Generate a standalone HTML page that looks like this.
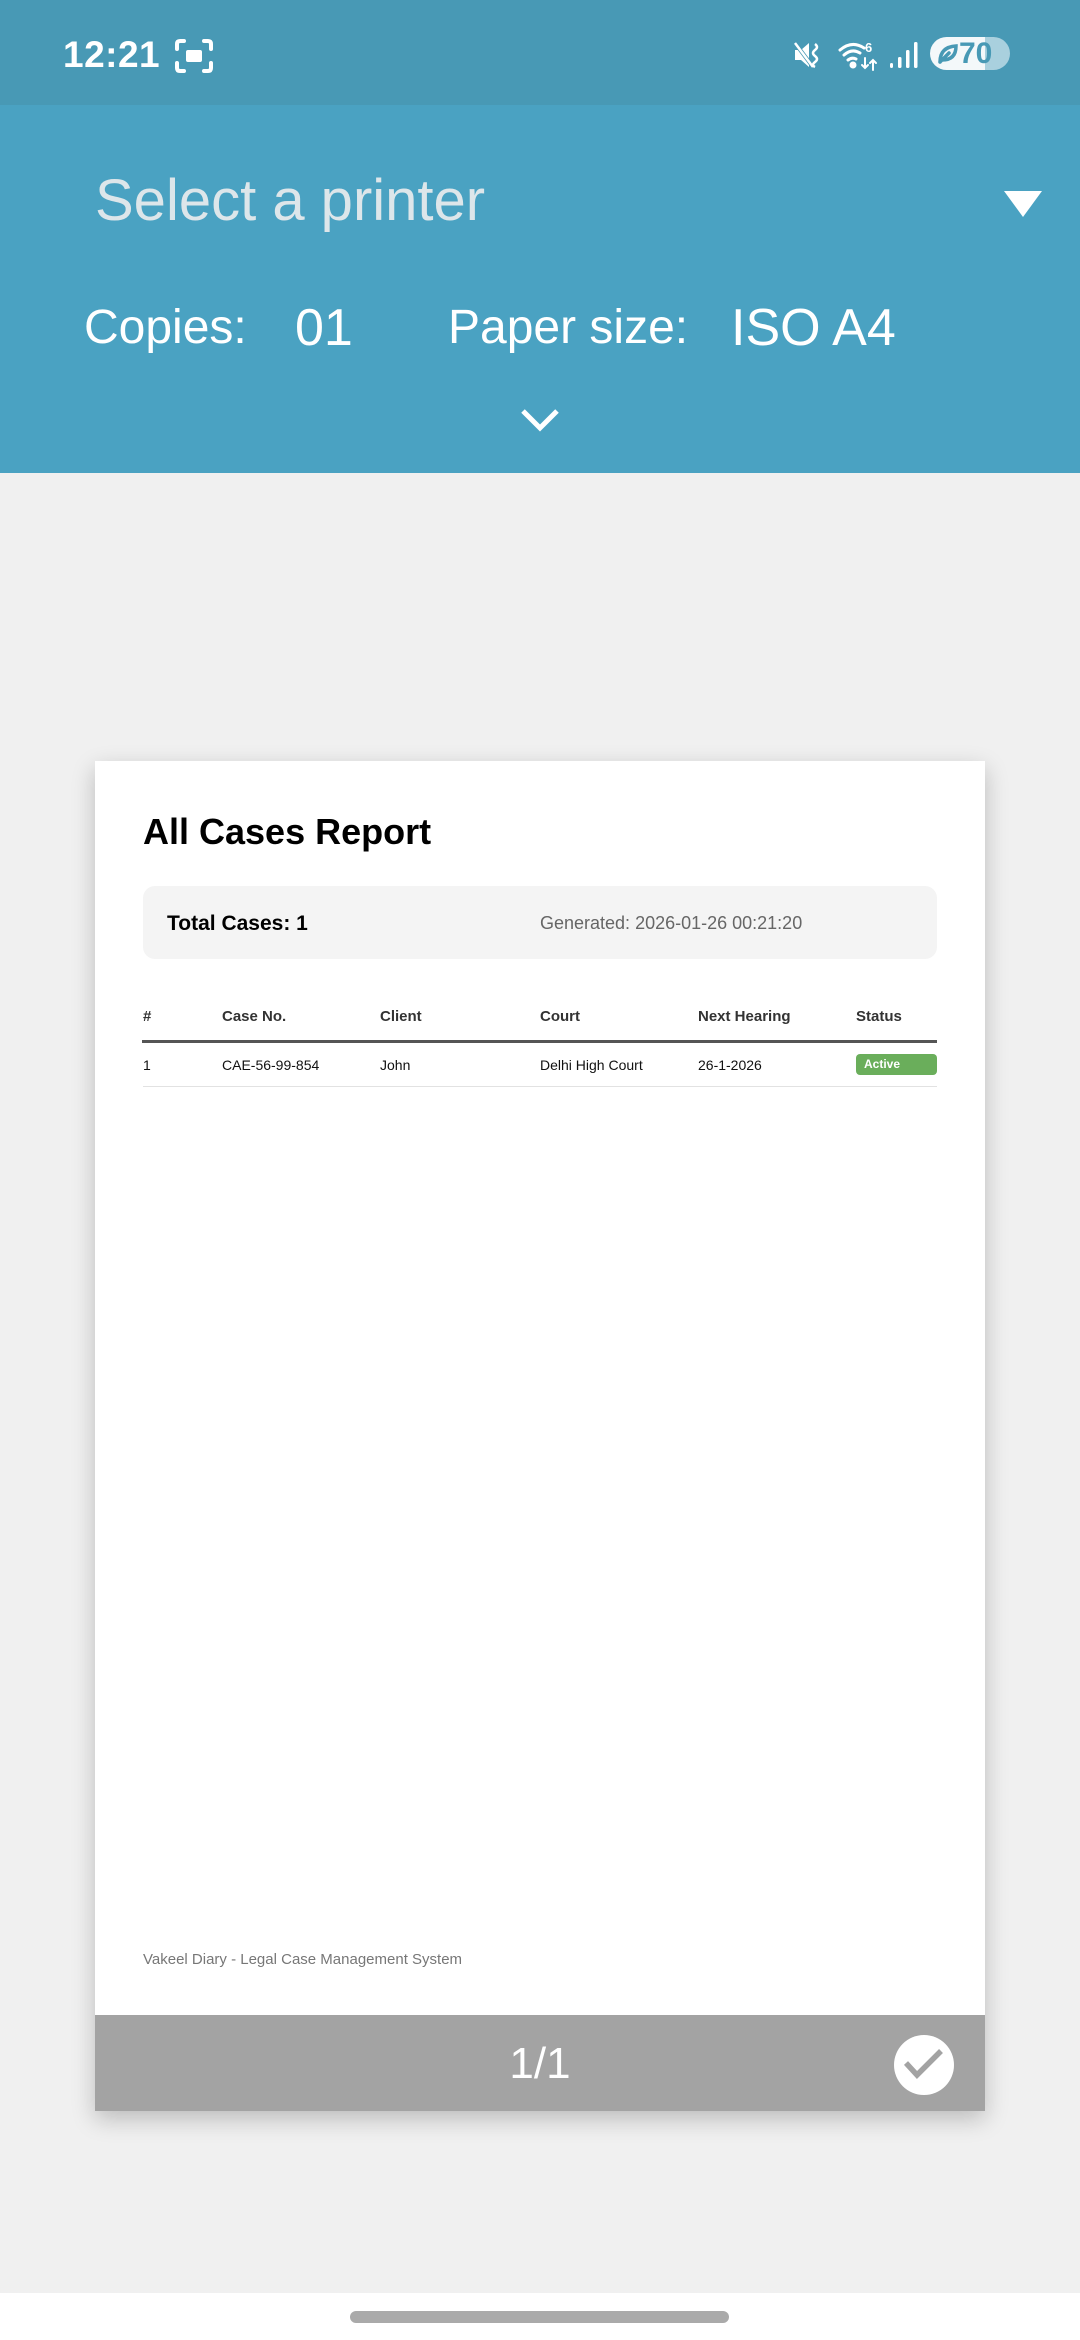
<!DOCTYPE html>
<html><head><meta charset="utf-8"><style>
*{margin:0;padding:0;box-sizing:border-box}
body{width:1080px;height:2340px;background:#f0f0f0;font-family:"Liberation Sans",sans-serif;position:relative;overflow:hidden}
.abs{position:absolute;white-space:nowrap}
#sb{position:absolute;left:0;top:0;width:1080px;height:105px;background:#4899b5}
#hd{position:absolute;left:0;top:105px;width:1080px;height:368px;background:#4aa2c2}
.hdt{color:#fff;line-height:1}
#page{position:absolute;left:95px;top:761px;width:890px;height:1350px;background:#fff;box-shadow:0 8px 22px rgba(0,0,0,0.22)}
.th{font-size:15px;font-weight:bold;color:#333}
.td{font-size:14px;color:#111}
</style></head><body>
<div id="sb"></div>
<div class="abs" style="left:63px;top:36px;font-size:37px;font-weight:bold;color:#fff;line-height:1;letter-spacing:0.5px">12:21</div>
<svg class="abs" style="left:174px;top:38px" width="40" height="36" viewBox="0 0 40 36" fill="none" stroke="#fff" stroke-width="4" stroke-linecap="round">
<path d="M3 11V6Q3 3 6 3H10M30 3H34Q37 3 37 6V11M37 25V30Q37 33 34 33H30M10 33H6Q3 33 3 30V25"/>
<rect x="12" y="12" width="16" height="12" rx="2" fill="#fff" stroke="none"/>
</svg>
<svg class="abs" style="left:793px;top:40px" width="30" height="30" viewBox="0 0 30 30" fill="#fff">
<path d="M2 10h6l8-7v24l-8-7H2z"/><path d="M2 3l18 24" stroke="#4899b5" stroke-width="4"/><path d="M2 3l18 24" stroke="#fff" stroke-width="2.5"/>
<path d="M22 4q4 3 0 6q-4 3 0 6q4 3 0 6q-4 3 0 5" stroke="#fff" stroke-width="2.5" fill="none"/>
</svg>
<svg class="abs" style="left:838px;top:38px" width="44" height="34" viewBox="0 0 44 34" fill="none" stroke="#fff" stroke-width="3" stroke-linecap="round">
<path d="M2 12Q14 2 26 10M6 17Q14 10 22 15M10 22Q14 19 18 21"/><circle cx="15" cy="27" r="2" fill="#fff"/>
<text x="27" y="14" fill="#fff" stroke="none" font-size="13" font-weight="bold" font-family="Liberation Sans">6</text>
<path d="M27 20v10M24 27l3 3 3-3M35 32V22M32 25l3-3 3 3" stroke-width="2"/>
</svg>
<svg class="abs" style="left:889px;top:40px" width="30" height="30" viewBox="0 0 30 30" fill="#fff">
<rect x="1" y="23" width="3" height="5" rx="1.5"/><rect x="9" y="17" width="3.5" height="11" rx="1.5"/><rect x="17" y="10" width="3.5" height="18" rx="1.5"/><rect x="25" y="2" width="3.5" height="26" rx="1.5"/>
</svg>
<div class="abs" style="left:930px;top:37px;width:80px;height:33px;border-radius:17px;background:linear-gradient(90deg,#f4f8fa 0,#f4f8fa 69%,#a9d0de 69%)"></div>
<svg class="abs" style="left:937px;top:43px" width="22" height="22" viewBox="0 0 22 22" fill="none" stroke="#4899b5" stroke-width="3.5" stroke-linecap="round"><path d="M3 19Q3 4 19 3Q19 17 5 17M3 19L12 10"/></svg>
<div class="abs" style="left:959px;top:37px;font-size:30px;font-weight:bold;color:#4899b5;line-height:33px">70</div>

<div id="hd"></div>
<div class="abs" style="left:95px;top:172px;font-size:58px;color:#dde6ea;line-height:1">Select a printer</div>
<svg class="abs" style="left:1004px;top:191px" width="38" height="26"><path d="M0 0H38L19 26z" fill="#fff"/></svg>
<div class="abs hdt" style="left:84px;top:304px;font-size:48px">Copies:</div>
<div class="abs hdt" style="left:295px;top:302px;font-size:52px">01</div>
<div class="abs hdt" style="left:448px;top:304px;font-size:48px">Paper size:</div>
<div class="abs hdt" style="left:731px;top:302px;font-size:52px">ISO A4</div>
<svg class="abs" style="left:518px;top:405px" width="44" height="30"><path d="M5 6L22 23L39 6" stroke="#fff" stroke-width="5" fill="none"/></svg>

<div id="page">
<div class="abs" style="left:48px;top:50px;font-size:36px;font-weight:bold;color:#000">All Cases Report</div>
<div class="abs" style="left:48px;top:125px;width:794px;height:73px;background:#f4f4f4;border-radius:12px"></div>
<div class="abs" style="left:72px;top:151px;font-size:21px;font-weight:bold;color:#000">Total Cases: 1</div>
<div class="abs" style="left:445px;top:152px;font-size:18px;color:#666">Generated: 2026-01-26 00:21:20</div>
<div class="abs th" style="left:48px;top:247px">#</div>
<div class="abs th" style="left:127px;top:247px">Case No.</div>
<div class="abs th" style="left:285px;top:247px">Client</div>
<div class="abs th" style="left:445px;top:247px">Court</div>
<div class="abs th" style="left:603px;top:247px">Next Hearing</div>
<div class="abs th" style="left:761px;top:247px">Status</div>
<div class="abs" style="left:47px;top:279px;width:795px;height:3px;background:#555"></div>
<div class="abs td" style="left:48px;top:296px">1</div>
<div class="abs td" style="left:127px;top:296px">CAE-56-99-854</div>
<div class="abs td" style="left:285px;top:296px">John</div>
<div class="abs td" style="left:445px;top:296px">Delhi High Court</div>
<div class="abs td" style="left:603px;top:296px">26-1-2026</div>
<div class="abs" style="left:761px;top:293px;width:81px;height:21px;background:#6aae5b;border-radius:4px;color:#fff;font-size:12px;font-weight:bold;line-height:21px;padding-left:8px">Active</div>
<div class="abs" style="left:48px;top:325px;width:794px;height:1px;background:#e2e2e2"></div>
<div class="abs" style="left:48px;top:1190px;font-size:15px;color:#777">Vakeel Diary - Legal Case Management System</div>
<div class="abs" style="left:0;top:1254px;width:890px;height:96px;background:#a3a3a3"></div>
<div class="abs" style="left:0;top:1281px;width:890px;text-align:center;font-size:44px;color:#fff;line-height:1">1/1</div>
<svg class="abs" style="left:799px;top:1274px" width="60" height="60"><circle cx="30" cy="30" r="30" fill="#fff"/><path d="M12 28L23 40L47 16" stroke="#a3a3a3" stroke-width="5.5" fill="none"/></svg>
</div>

<div class="abs" style="left:0;top:2293px;width:1080px;height:47px;background:#fff"></div>
<div class="abs" style="left:350px;top:2311px;width:379px;height:12px;border-radius:6px;background:#aaa"></div>
</body></html>
